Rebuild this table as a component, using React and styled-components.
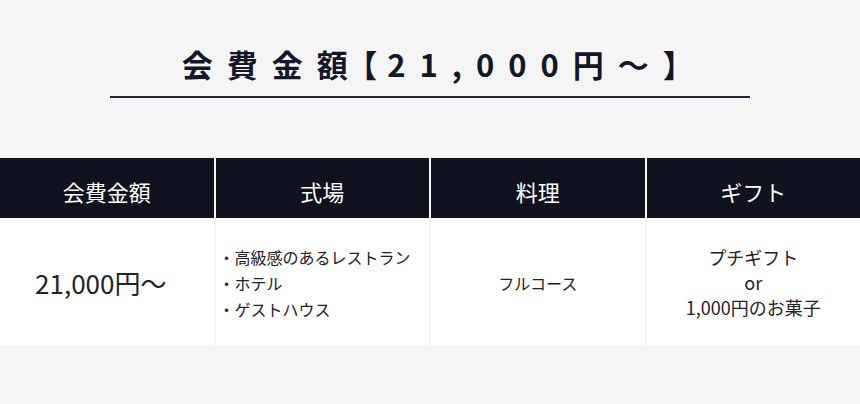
import React from "react";
import styled, { createGlobalStyle } from "styled-components";

const Global = createGlobalStyle`
  html, body { margin: 0; padding: 0; background: #f5f5f5; }
  body { font-family: "Noto Sans CJK JP", "Noto Sans", sans-serif; color: #1f1f24; }
`;

const Page = styled.div`
  width: 860px;
  height: 404px;
  background: #f5f5f5;
  display: flex;
  flex-direction: column;
  align-items: center;
  padding-top: 41px;
  box-sizing: border-box;
`;

const Title = styled.h1`
  margin: 0;
  font-size: 31px;
  font-weight: 700;
  letter-spacing: 14px;
  color: #14162a;
  line-height: 46px;
  padding-left: 6px;
`;

const Bracket = styled.span`
  font-feature-settings: "halt";
  letter-spacing: ${(p) => p.$ls || 6}px;
`;

const Rule = styled.div`
  width: 640px;
  height: 2px;
  background: #22243a;
  margin-top: 9px;
`;

const Table = styled.div`
  align-self: stretch;
  margin-top: 60px;
  display: grid;
  grid-template-columns: repeat(4, 1fr);
  column-gap: 2px;
`;

const Head = styled.div`
  height: 60px;
  box-sizing: border-box;
  padding-top: 6px;
  background: #10121f;
  color: #ffffff;
  font-size: 22px;
  display: flex;
  align-items: center;
  justify-content: center;
`;

const Cell = styled.div`
  height: 127px;
  background: #ffffff;
  display: flex;
  flex-direction: column;
  align-items: center;
  justify-content: center;
  text-align: center;
  font-size: ${(p) => p.$size || 16}px;
  line-height: ${(p) => p.$lh || 26}px;
  color: #222228;
  padding-top: 2px;
  padding-right: ${(p) => p.$pr || 0}px;
  box-sizing: border-box;
`;

const List = styled.div`
  display: flex;
  flex-direction: column;
  align-self: stretch;
  text-align: left;
  padding-left: 3px;
  font-size: 16px;
  line-height: 26px;
`;

export default function App() {
  return (
    <>
      <Global />
      <Page>
        <Title>
          会費金額<Bracket $ls={10}>【</Bracket>21,000円～<Bracket $ls={0}>】</Bracket>
        </Title>
        <Rule />
        <Table>
          <Head>会費金額</Head>
          <Head>式場</Head>
          <Head>料理</Head>
          <Head>ギフト</Head>
          <Cell $size={26} $pr={12}>21,000円～</Cell>
          <Cell>
            <List>
              <span>・高級感のあるレストラン</span>
              <span>・ホテル</span>
              <span>・ゲストハウス</span>
            </List>
          </Cell>
          <Cell>フルコース</Cell>
          <Cell $size={18} $lh={25}>
            <span>プチギフト</span>
            <span>or</span>
            <span>1,000円のお菓子</span>
          </Cell>
        </Table>
      </Page>
    </>
  );
}
